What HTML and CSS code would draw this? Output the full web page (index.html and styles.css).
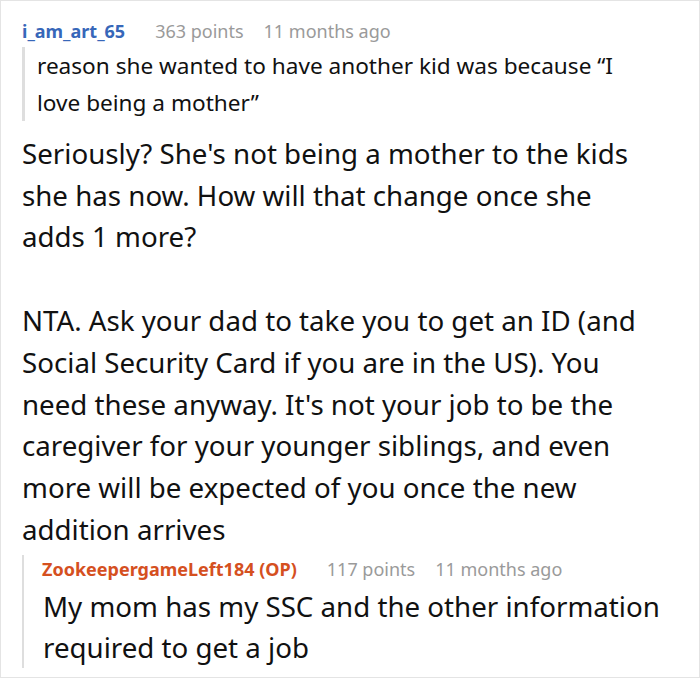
FILE: index.html
```html
<!DOCTYPE html>
<html>
<head>
<meta charset="utf-8">
<link rel="stylesheet" href="styles.css">
</head>
<body>
<div class="frame">
  <div class="comment">
    <div class="meta">
      <span class="user">i_am_art_65</span>
      <span class="info">363 points</span>
      <span class="info">11 months ago</span>
    </div>
    <blockquote class="quote">reason she wanted to have another kid was because “I love being a mother”</blockquote>
    <div class="body">
      <p>Seriously? She's not being a mother to the kids she has now. How will that change once she adds 1 more?</p>
      <p>NTA. Ask your dad to take you to get an ID (and Social Security Card if you are in the US). You need these anyway. It's not your job to be the caregiver for your younger siblings, and even more will be expected of you once the new addition arrives</p>
    </div>
    <div class="reply">
      <div class="meta reply-meta">
        <span class="user op">ZookeepergameLeft184 (OP)</span>
        <span class="info">117 points</span>
        <span class="info">11 months ago</span>
      </div>
      <p class="reply-text">My mom has my SSC and the other information required to get a job</p>
    </div>
  </div>
</div>
</body>
</html>
```

FILE: styles.css
```css
html, body {
  margin: 0;
  padding: 0;
  background: #fff;
}

.frame {
  box-sizing: border-box;
  width: 700px;
  height: 678px;
  border: 1px solid #e4e4e4;
  overflow: hidden;
  font-family: "Noto Sans", "Open Sans", sans-serif;
  color: #111;
}

.comment {
  padding: 16px 0 0 21px;
  width: 660px;
}

.meta {
  display: flex;
  gap: 20px;
  font-size: 18px;
  line-height: 28px;
  align-items: baseline;
  white-space: nowrap;
}

.user {
  color: #3767b9;
  font-weight: 700;
  margin-right: 10px;
}

.user.op {
  color: #d5501f;
  margin-left: -1px;
}

.info {
  color: #9a9a9a;
}

.quote {
  margin: 2px 40px 0 0;
  border-left: 3px solid #dedede;
  padding-left: 12px;
  font-size: 22.6px;
  line-height: 37px;
}

.body {
  margin: 12px 25px 0 0;
  font-size: 27.7px;
  line-height: 41.7px;
}

.body p {
  margin: 0 0 42px 0;
}

.body p:last-child {
  margin-bottom: 0;
}

.reply {
  margin-top: 18px;
  border-left: 2px solid #dedede;
  padding-left: 19px;
}

.reply-meta {
  margin-top: -13px;
}

.reply-text {
  margin: 3px 0 -10px 0;
  font-size: 27.7px;
  line-height: 41px;
}
```
